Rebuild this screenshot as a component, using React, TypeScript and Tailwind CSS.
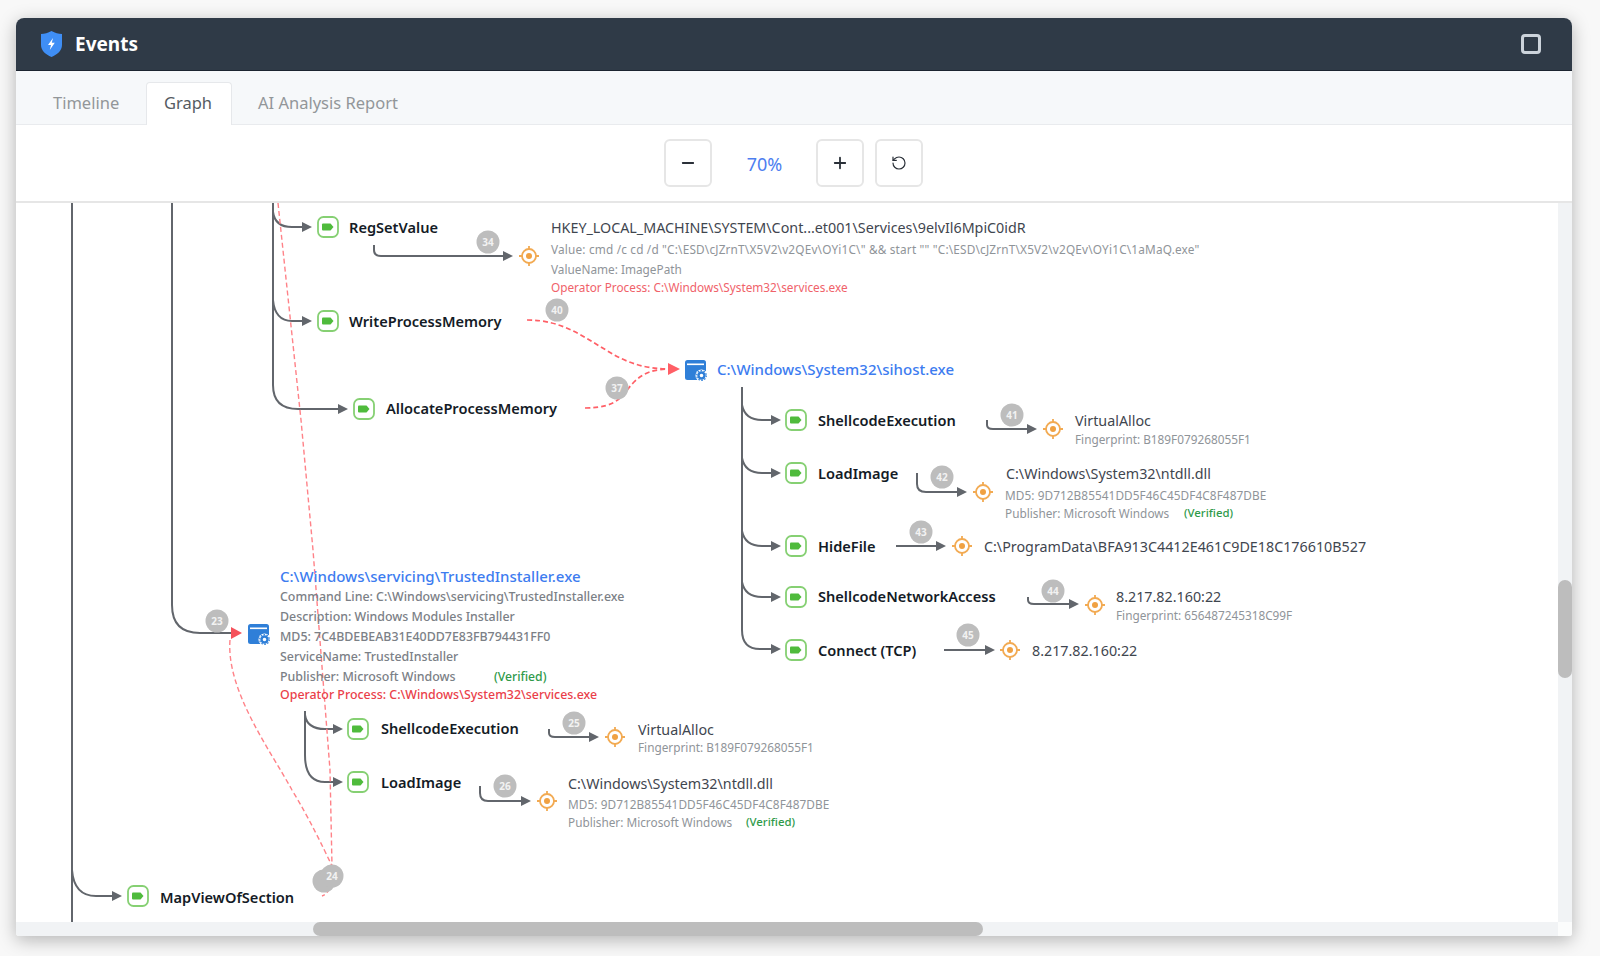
import React from "react";
import { Minus, Plus, RotateCcw } from "lucide-react";

const OX = 16;
const OY = 203;
const GRAY = "#62666c";
const RED = "#ff5f66";

function at(x: number, y: number) {
  return { left: x - OX, top: y - OY };
}

function EventIcon({ x, y }: { x: number; y: number }) {
  return (
    <svg className="absolute" style={at(x - 1, y - 11)} width="22" height="22" viewBox="0 0 22 22">
      <rect x="1" y="1" width="20" height="20" rx="5.5" fill="#fff" stroke="#86d073" strokeWidth="1.8" />
      <path d="M6 7.500h7.500l3 3.500-3 3.500H6a1 1 0 0 1-1-1v-5a1 1 0 0 1 1-1z" fill="#4fbb3c" />
    </svg>
  );
}

function TargetIcon({ x, y }: { x: number; y: number }) {
  return (
    <svg className="absolute" style={at(x - 11, y - 11)} width="22" height="22" viewBox="0 0 22 22" fill="none">
      <circle cx="11" cy="11" r="7" stroke="#f2aa52" strokeWidth="1.8" />
      <circle cx="11" cy="11" r="3" fill="#f0a142" />
      <path d="M11 1v3.500M11 17.500V21M1 11h3.500M17.500 11H21" stroke="#f2aa52" strokeWidth="1.8" />
    </svg>
  );
}

function ProcessIcon({ x, y }: { x: number; y: number }) {
  return (
    <svg className="absolute" style={at(x, y)} width="23" height="22" viewBox="0 0 23 22">
      <rect x="0" y="0" width="21" height="20" rx="2.500" fill="#2f7fd8" />
      <rect x="2" y="3.500" width="17" height="1.600" fill="#fff" />
      <circle cx="16.500" cy="15.500" r="6" fill="#fff" />
      <circle cx="16.500" cy="15.500" r="3" fill="none" stroke="#2f7fd8" strokeWidth="2.400" />
      <circle cx="16.500" cy="15.500" r="4.800" fill="none" stroke="#2f7fd8" strokeWidth="1.200" strokeDasharray="1.600 1.400" />
    </svg>
  );
}

function Badge({ x, y, n }: { x: number; y: number; n: string }) {
  return (
    <div
      className="absolute flex h-[23px] w-[23px] -translate-x-1/2 -translate-y-1/2 items-center justify-center rounded-full bg-[#bdbdbd] text-[10px] font-bold text-[#f2f2f2]"
      style={at(x, y)}
    >
      {n}
    </div>
  );
}

function Label({ x, y, children }: { x: number; y: number; children: React.ReactNode }) {
  return (
    <div
      className="absolute -translate-y-1/2 whitespace-nowrap text-[14.6px] font-semibold leading-5 text-[#141b26]"
      style={at(x, y - 1)}
    >
      {children}
    </div>
  );
}

function Main({ x, y, children }: { x: number; y: number; children: React.ReactNode }) {
  return (
    <div className="absolute -translate-y-1/2 whitespace-nowrap text-[14.3px] leading-5 text-[#3f464f]" style={at(x, y)}>
      {children}
    </div>
  );
}

function Sub({ x, y, red, spacing, children }: { x: number; y: number; red?: boolean; spacing?: string; children: React.ReactNode }) {
  return (
    <div
      className={
        red
          ? `absolute -translate-y-1/2 whitespace-nowrap text-[11.8px] leading-4 text-[#f0626a] ${spacing ?? ""}`
          : `absolute -translate-y-1/2 whitespace-nowrap text-[11.8px] leading-4 text-[#8f9499] ${spacing ?? ""}`
      }
      style={at(x, y)}
    >
      {children}
    </div>
  );
}

function Strong({ x, y, red, children }: { x: number; y: number; red?: boolean; children: React.ReactNode }) {
  return (
    <div
      className={
        red
          ? "absolute -translate-y-1/2 whitespace-nowrap text-[12.4px] font-medium leading-4 text-[#ea3f4a]"
          : "absolute -translate-y-1/2 whitespace-nowrap text-[12.4px] font-medium leading-4 text-[#7b8086]"
      }
      style={at(x, y)}
    >
      {children}
    </div>
  );
}

function Verified({ x, y, big }: { x: number; y: number; big?: boolean }) {
  return (
    <div
      className={
        big
          ? "absolute -translate-y-1/2 whitespace-nowrap text-[12.2px] font-medium leading-4 text-[#2f9a4a]"
          : "absolute -translate-y-1/2 whitespace-nowrap text-[11.4px] font-medium leading-4 text-[#2f9a4a]"
      }
      style={at(x, y)}
    >
      (Verified)
    </div>
  );
}

function Link({ x, y, children }: { x: number; y: number; children: React.ReactNode }) {
  return (
    <div className="absolute -translate-y-1/2 whitespace-nowrap text-[15px] font-medium leading-5 text-[#3d7cf0]" style={at(x, y - 1)}>
      {children}
    </div>
  );
}

const grayPaths = [
  "M72 203V922",
  "M172 203V605Q172 633 200 633H234",
  "M273 203V385Q273 409 298 409H340",
  "M273 203V212Q275 227 292 227H304",
  "M273 300Q275 321 292 321H304",
  "M374 245V250Q374 256 381 256H505",
  "M742 387V630Q742 649 760 649H773",
  "M742 405Q745 420 762 420H773",
  "M742 458Q745 473 762 473H773",
  "M742 531Q745 546 762 546H773",
  "M742 582Q745 597 762 597H773",
  "M987 420V425Q987 429 993 429H1029",
  "M917 473V484Q917 492 926 492H959",
  "M896 546H938",
  "M1028 597V600Q1028 604 1034 604H1071",
  "M944 650H987",
  "M305 711V755Q305 782 325 782H335",
  "M305 715Q307 729 325 729H335",
  "M549 729V733Q549 737 555 737H591",
  "M480 786V793Q480 801 488 801H523",
  "M72 870Q74 896 96 896H114",
];

const grayTips: [number, number][] = [
  [348, 409],
  [312, 227],
  [312, 321],
  [513, 256],
  [781, 649],
  [781, 420],
  [781, 473],
  [781, 546],
  [781, 597],
  [1037, 429],
  [967, 492],
  [946, 546],
  [1079, 604],
  [995, 650],
  [343, 782],
  [343, 729],
  [599, 737],
  [531, 801],
  [122, 896],
];

const strongRedPaths = [
  "M527 320C562 320 582 336 606 350C628 364 646 369 672 369",
  "M585 408C620 408 622 394 634 382C644 372 655 369 672 369",
];

const faintRedPaths = [
  "M278 203L301 420L313 550L330 770L332 866C332 885 330 893 322 896",
  "M230 640C226 690 270 750 292 790C310 820 322 845 332 866",
];

function Graph() {
  return (
    <div className="relative h-full min-w-0 flex-1 overflow-hidden bg-white">
      <svg className="absolute left-0 top-0" width="1542" height="719" viewBox="16 203 1542 719" fill="none">
        {grayPaths.map((d) => (
          <path key={d} d={d} stroke={GRAY} strokeWidth="2" />
        ))}
        {grayTips.map(([x, y]) => (
          <path key={`${x}-${y}`} d={`M${x} ${y}l-10-5v10z`} fill={GRAY} />
        ))}
        {strongRedPaths.map((d) => (
          <path key={d} d={d} stroke={RED} strokeWidth="1.7" strokeDasharray="5 3" />
        ))}
        {faintRedPaths.map((d) => (
          <path key={d} d={d} stroke="#ff8288" strokeWidth="1.4" strokeDasharray="5 3" />
        ))}
        <path d="M680 369l-12-6v12z" fill={RED} />
        <path d="M242 633l-11-6v12z" fill="#f5525c" />
      </svg>

      <Badge x={488} y={242} n="34" />
      <Badge x={557} y={310} n="40" />
      <Badge x={617} y={388} n="37" />
      <Badge x={1012} y={415} n="41" />
      <Badge x={942} y={477} n="42" />
      <Badge x={921} y={532} n="43" />
      <Badge x={1053} y={591} n="44" />
      <Badge x={968} y={635} n="45" />
      <Badge x={217} y={621} n="23" />
      <Badge x={574} y={723} n="25" />
      <Badge x={505} y={786} n="26" />
      <Badge x={324} y={881} n="" />
      <Badge x={332} y={876} n="24" />

      <EventIcon x={318} y={227} />
      <Label x={349} y={228}>RegSetValue</Label>
      <TargetIcon x={529} y={256} />
      <Main x={551} y={228}>HKEY_LOCAL_MACHINE\SYSTEM\Cont...et001\Services\9elvIl6MpiC0idR</Main>
      <Sub x={551} y={249} spacing="tracking-[0.18px]">Value: cmd /c cd /d "C:\ESD\cJZrnT\X5V2\v2QEv\OYi1C\" &amp;&amp; start "" "C:\ESD\cJZrnT\X5V2\v2QEv\OYi1C\1aMaQ.exe"</Sub>
      <Sub x={551} y={269}>ValueName: ImagePath</Sub>
      <Sub x={551} y={287} red>Operator Process: C:\Windows\System32\services.exe</Sub>

      <EventIcon x={318} y={321} />
      <Label x={349} y={322}>WriteProcessMemory</Label>
      <EventIcon x={354} y={409} />
      <Label x={386} y={409}>AllocateProcessMemory</Label>

      <ProcessIcon x={685} y={360} />
      <Link x={717} y={370}>C:\Windows\System32\sihost.exe</Link>

      <EventIcon x={786} y={420} />
      <Label x={818} y={421}>ShellcodeExecution</Label>
      <TargetIcon x={1053} y={429} />
      <Main x={1075} y={421}>VirtualAlloc</Main>
      <Sub x={1075} y={439}>Fingerprint: B189F079268055F1</Sub>

      <EventIcon x={786} y={473} />
      <Label x={818} y={474}>LoadImage</Label>
      <TargetIcon x={983} y={492} />
      <Main x={1006} y={474}>C:\Windows\System32\ntdll.dll</Main>
      <Sub x={1005} y={495} spacing="tracking-[0.07px]">MD5: 9D712B85541DD5F46C45DF4C8F487DBE</Sub>
      <Sub x={1005} y={513}>Publisher: Microsoft Windows</Sub>
      <Verified x={1184} y={513} />

      <EventIcon x={786} y={546} />
      <Label x={818} y={547}>HideFile</Label>
      <TargetIcon x={962} y={546} />
      <Main x={984} y={547}>C:\ProgramData\BFA913C4412E461C9DE18C176610B527</Main>

      <EventIcon x={786} y={597} />
      <Label x={818} y={597}>ShellcodeNetworkAccess</Label>
      <TargetIcon x={1095} y={605} />
      <Main x={1116} y={597}>8.217.82.160:22</Main>
      <Sub x={1116} y={615}>Fingerprint: 656487245318C99F</Sub>

      <EventIcon x={786} y={650} />
      <Label x={818} y={651}>Connect (TCP)</Label>
      <TargetIcon x={1010} y={650} />
      <Main x={1032} y={651}>8.217.82.160:22</Main>

      <ProcessIcon x={248} y={624} />
      <Link x={280} y={577}>C:\Windows\servicing\TrustedInstaller.exe</Link>
      <Strong x={280} y={597}>Command Line: C:\Windows\servicing\TrustedInstaller.exe</Strong>
      <Strong x={280} y={617}>Description: Windows Modules Installer</Strong>
      <Strong x={280} y={637}>MD5: 7C4BDEBEAB31E40DD7E83FB794431FF0</Strong>
      <Strong x={280} y={657}>ServiceName: TrustedInstaller</Strong>
      <Strong x={280} y={677}>Publisher: Microsoft Windows</Strong>
      <Verified x={494} y={677} big />
      <Strong x={280} y={695} red>Operator Process: C:\Windows\System32\services.exe</Strong>

      <EventIcon x={348} y={729} />
      <Label x={381} y={729}>ShellcodeExecution</Label>
      <TargetIcon x={615} y={737} />
      <Main x={638} y={730}>VirtualAlloc</Main>
      <Sub x={638} y={747}>Fingerprint: B189F079268055F1</Sub>

      <EventIcon x={348} y={782} />
      <Label x={381} y={783}>LoadImage</Label>
      <TargetIcon x={547} y={801} />
      <Main x={568} y={784}>C:\Windows\System32\ntdll.dll</Main>
      <Sub x={568} y={804} spacing="tracking-[0.07px]">MD5: 9D712B85541DD5F46C45DF4C8F487DBE</Sub>
      <Sub x={568} y={822}>Publisher: Microsoft Windows</Sub>
      <Verified x={746} y={822} />

      <EventIcon x={128} y={896} />
      <Label x={160} y={898}>MapViewOfSection</Label>
    </div>
  );
}

function ToolButton({ children }: { children: React.ReactNode }) {
  return (
    <button className="flex h-12 w-12 items-center justify-center rounded-md border-2 border-[#e6e6e6] bg-white text-[#2a3038]">
      {children}
    </button>
  );
}

export default function App() {
  return (
    <div className="h-[956px] w-[1600px] bg-[#f8f8f8] pl-4 pt-[18px] font-['Noto_Sans',sans-serif]">
      <div className="flex h-[918px] w-[1556px] flex-col overflow-hidden rounded-t-lg rounded-b-[3px] bg-white shadow-[0_4px_18px_rgba(0,0,0,0.28)]">
        <header className="flex h-[53px] shrink-0 items-center justify-between border-b border-[#1c2430] bg-[#2f3a47] pl-[25px] pr-[31px]">
          <div className="flex items-center gap-[13px]">
            <svg width="21" height="26" viewBox="0 0 21 26">
              <path d="M10.500 0C14 2 17.500 2.800 21 3v11c0 5.500-4.500 9.500-10.500 12C4.500 23.500 0 19.500 0 14V3c3.500-.2 7-1 10.500-3z" fill="#3f8ef5" />
              <path d="M12 7l-5 7h3l-1.200 5 5-7.200h-3z" fill="#fff" />
            </svg>
            <span className="text-[19px] font-bold leading-none text-white">Events</span>
          </div>
          <div className="h-5 w-5 rounded-[4px] border-[3px] border-[#ccd3db]" />
        </header>

        <nav className="flex h-[54px] shrink-0 items-end border-b border-[#e9ebee] bg-[#f6f8fa] pl-[25px] text-[16.5px]">
          <div className="flex h-[42px] w-[105px] items-center pl-[12px] text-[#929699]">Timeline</div>
          <div className="-mb-px flex h-[43px] w-[86px] items-center justify-center rounded-t border border-b-0 border-[#e6e8eb] bg-white pb-[2px] pr-[2px] text-[#555b62]">
            Graph
          </div>
          <div className="flex h-[42px] items-center pl-[26px] text-[#929699]">AI Analysis Report</div>
        </nav>

        <div className="flex h-[78px] shrink-0 items-center justify-center border-b-2 border-[#e6e6e6] bg-white pr-[2px]">
          <ToolButton>
            <Minus size={18} strokeWidth={2.4} />
          </ToolButton>
          <div className="w-[104px] pl-[2px] pt-[3px] text-center text-[18px] text-[#4d7ef0]">70%</div>
          <ToolButton>
            <Plus size={18} strokeWidth={2.4} />
          </ToolButton>
          <div className="ml-[11px]">
            <ToolButton>
              <RotateCcw size={16} strokeWidth={1.8} />
            </ToolButton>
          </div>
        </div>

        <div className="flex min-h-0 flex-1">
          <Graph />
          <div className="w-[14px] shrink-0 bg-[#f1f3f5] pt-[377px]">
            <div className="h-[98px] w-[14px] rounded-full bg-[#bdbdbd]" />
          </div>
        </div>

        <div className="flex h-[14px] shrink-0 bg-[#f1f3f5]">
          <div className="min-w-0 flex-1 pl-[297px]">
            <div className="h-[14px] w-[670px] rounded-full bg-[#bdbdbd]" />
          </div>
          <div className="h-[14px] w-[14px] bg-[#fbfcfc]" />
        </div>
      </div>
    </div>
  );
}
